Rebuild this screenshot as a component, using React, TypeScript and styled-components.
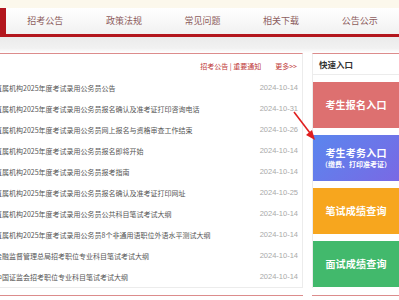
import React from "react";
import styled, { createGlobalStyle } from "styled-components";

const Global = createGlobalStyle`
  html, body { margin: 0; padding: 0; background: #fff; overflow: hidden; }
  body { font-family: "Noto Sans CJK SC", "Noto Sans", sans-serif; width: 399px; height: 300px; }
  * { box-sizing: border-box; }
`;

const Page = styled.div`
  width: 399px;
  height: 300px;
  overflow: hidden;
  display: flex;
  flex-direction: column;
`;

const TopBand = styled.div`
  height: 8px;
  background: #fcf8ec;
  flex: none;
`;

const NavBar = styled.nav`
  height: 29px;
  flex: none;
  display: flex;
  background: linear-gradient(#ffffff, #f1f1f1);
  border-bottom: 3px solid #b3161d;
`;

const ActiveTab = styled.div`
  width: 6px;
  background: #b3161d;
`;

const NavItem = styled.div`
  width: 79px;
  display: flex;
  align-items: center;
  justify-content: center;
  font-size: 9px;
  color: #8d5d5d;
  padding-bottom: 1px;
`;

const ShadeBand = styled.div`
  height: 16px;
  flex: none;
  background: linear-gradient(#ebebeb, #f1f1f1 70%, #ffffff);
`;

const Content = styled.div`
  position: relative;
  display: flex;
  flex-direction: column;
  gap: 7px;
`;

const CardRow = styled.div`
  display: flex;
  gap: 9px;
  margin-left: -12px;
`;

const NewsCard = styled.section`
  width: 315px;
  flex: none;
  border-top: 1px solid #dc8c8c;
  border-right: 1px solid #ececec;
  border-bottom: 1px solid #ececec;
  padding: 0 4px 0 7px;
`;

const NewsHead = styled.div`
  height: 23px;
  display: flex;
  align-items: center;
  justify-content: flex-end;
  font-size: 7px;
  color: #c03a3a;
  padding-right: 1px;
`;

const HeadLink = styled.span<{ $gap?: number }>`
  margin-left: ${(p) => p.$gap ?? 0}px;
  white-space: nowrap;
`;

const NewsList = styled.ul`
  list-style: none;
  margin: 0;
  padding: 0;
`;

const NewsRow = styled.li`
  height: 21px;
  display: flex;
  align-items: center;
  justify-content: space-between;
  gap: 8px;
`;

const NewsTitle = styled.span`
  font-size: 7px;
  color: #555;
  white-space: nowrap;
  overflow: hidden;
  flex: 1;
  min-width: 0;
`;

const NewsDate = styled.span`
  font-size: 7.5px;
  color: #a9a9a9;
  flex: none;
  font-family: "Liberation Sans", "Noto Sans", sans-serif;
`;

const QuickCard = styled.section`
  width: 90px;
  flex: none;
  border-top: 1px solid #dc8c8c;
  border-left: 1px solid #ececec;
  display: flex;
  flex-direction: column;
  gap: 7px;
`;

const QuickHead = styled.div`
  height: 21px;
  display: flex;
  align-items: center;
  padding-left: 6px;
  font-size: 8.5px;
  font-weight: 700;
  color: #333;
  border-bottom: 1px solid #ececec;
`;

const EntryBox = styled.div<{ $bg: string }>`
  height: 46px;
  background: ${(p) => p.$bg};
  color: #fff;
  display: flex;
  flex-direction: column;
  align-items: center;
  justify-content: center;
  padding-right: 3px;
`;

const EntryTitle = styled.div`
  font-size: 10px;
  font-weight: 700;
  line-height: 12px;
  letter-spacing: 0.2px;
`;

const EntrySub = styled.div`
  font-size: 7px;
  line-height: 10px;
  font-weight: 700;
`;

const NextCard = styled.div<{ $w: number }>`
  width: ${(p) => p.$w}px;
  height: 10px;
  flex: none;
  border-top: 1px solid #dc8c8c;
`;

const Arrow = styled.svg`
  position: absolute;
  left: 288px;
  top: 55px;
  width: 32px;
  height: 34px;
  overflow: visible;
`;

const navs = ["招考公告", "政策法规", "常见问题", "相关下载", "公告公示"];

const news: [string, string][] = [
  ["直属机构2025年度考试录用公务员公告", "2024-10-14"],
  ["直属机构2025年度考试录用公务员报名确认及准考证打印咨询电话", "2024-10-31"],
  ["直属机构2025年度考试录用公务员网上报名与资格审查工作结束", "2024-10-26"],
  ["直属机构2025年度考试录用公务员报名即将开始", "2024-10-14"],
  ["直属机构2025年度考试录用公务员报考指南", "2024-10-14"],
  ["直属机构2025年度考试录用公务员报名确认及准考证打印网址", "2024-10-25"],
  ["直属机构2025年度考试录用公务员公共科目笔试考试大纲", "2024-10-14"],
  ["直属机构2025年度考试录用公务员8个非通用语职位外语水平测试大纲", "2024-10-14"],
  ["金融监督管理总局招考职位专业科目笔试考试大纲", "2024-10-14"],
  ["中国证监会招考职位专业科目笔试考试大纲", "2024-10-14"],
];

export default function App() {
  return (
    <Page>
      <Global />
      <TopBand />
      <NavBar>
        <ActiveTab />
        {navs.map((n) => (
          <NavItem key={n}>{n}</NavItem>
        ))}
      </NavBar>
      <ShadeBand />
      <Content>
        <CardRow>
          <NewsCard>
            <NewsHead>
              <HeadLink>招考公告 | 重要通知</HeadLink>
              <HeadLink $gap={14}>更多&gt;&gt;</HeadLink>
            </NewsHead>
            <NewsList>
              {news.map(([t, d]) => (
                <NewsRow key={t}>
                  <NewsTitle>{t}</NewsTitle>
                  <NewsDate>{d}</NewsDate>
                </NewsRow>
              ))}
            </NewsList>
          </NewsCard>
          <QuickCard>
            <QuickHead>快速入口</QuickHead>
            <EntryBox $bg="#dd7070">
              <EntryTitle>考生报名入口</EntryTitle>
            </EntryBox>
            <EntryBox $bg="linear-gradient(135deg, #5a86ee, #7a68e4)">
              <EntryTitle>考生考务入口</EntryTitle>
              <EntrySub>（缴费、打印准考证）</EntrySub>
            </EntryBox>
            <EntryBox $bg="#f7a61e">
              <EntryTitle>笔试成绩查询</EntryTitle>
            </EntryBox>
            <EntryBox $bg="#42b96c">
              <EntryTitle>面试成绩查询</EntryTitle>
            </EntryBox>
          </QuickCard>
        </CardRow>
        <CardRow>
          <NextCard $w={315} />
          <NextCard $w={90} />
        </CardRow>
        <Arrow viewBox="0 0 32 34">
          <line x1="6" y1="4" x2="22" y2="25" stroke="#e01f1f" strokeWidth="1.6" />
          <polygon points="27,32 18,27 24,22" fill="#e01f1f" />
        </Arrow>
      </Content>
    </Page>
  );
}
